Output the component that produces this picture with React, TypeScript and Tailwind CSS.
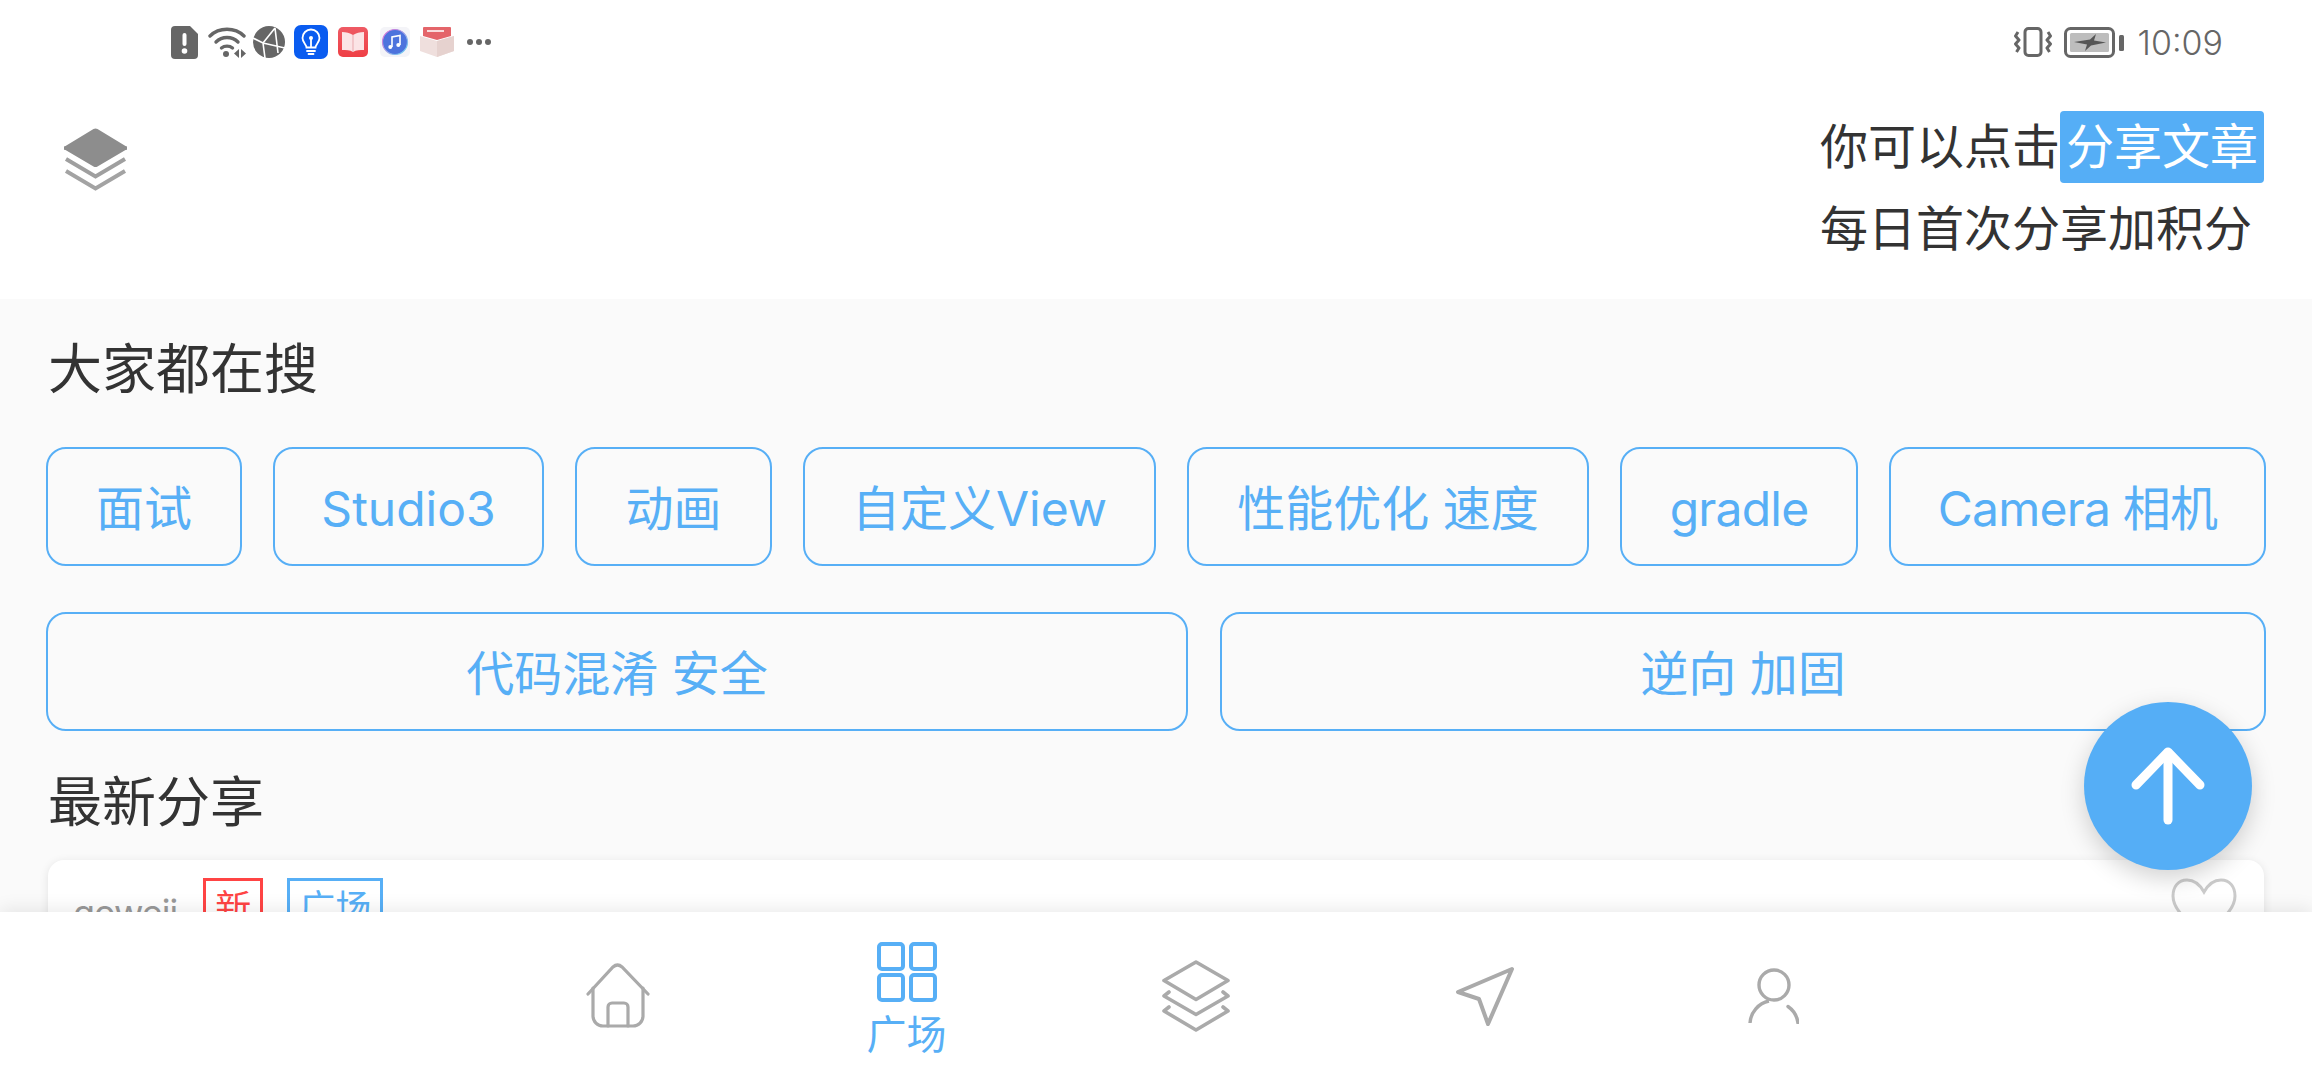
const fontStack = "font-[family-name:Inter,'Noto_Sans_CJK_SC',sans-serif]";

const tagBase =
  'flex h-[119px] items-center justify-center rounded-[20px] border-2 border-[#57aff6] pt-[4px] text-[48px] text-[#57aff6]';

const topTags = [
  { label: '面试', cls: 'w-[196px]' },
  { label: 'Studio3', cls: 'w-[271px]' },
  { label: '动画', cls: 'w-[197px]' },
  { label: '自定义View', cls: 'w-[353px]' },
  { label: '性能优化 速度', cls: 'w-[402px]' },
  { label: 'gradle', cls: 'w-[238px] tracking-[-0.8px]' },
  { label: 'Camera 相机', cls: 'w-[377px] tracking-[-0.8px]' },
];

function AlertIcon() {
  return (
    <svg width="27" height="33" viewBox="0 0 27 33">
      <path d="M4 0H19L27 8V29a4 4 0 0 1-4 4H4a4 4 0 0 1-4-4V4a4 4 0 0 1 4-4Z" fill="#666" />
      <rect x="11.5" y="7" width="4" height="13" rx="2" fill="#fff" />
      <circle cx="13.5" cy="25" r="2.8" fill="#fff" />
    </svg>
  );
}

function WifiIcon() {
  return (
    <svg width="38" height="31" viewBox="0 0 38 31" fill="none" stroke="#666" strokeWidth="3.4" strokeLinecap="round">
      <path d="M2 9C11 0 27 0 36 9" />
      <path d="M8 15C14 9 24 9 30 15" />
      <path d="M13.5 21C16.5 18.5 21.5 18.5 24.5 21" />
      <circle cx="18" cy="27" r="3" fill="#666" stroke="none" />
      <path d="M31 22V31L26 26.5Z" fill="#666" stroke="none" />
      <path d="M33 22V31L38 26.5Z" fill="#666" stroke="none" />
    </svg>
  );
}

function GlobeIcon() {
  return (
    <svg width="32" height="32" viewBox="0 0 32 32">
      <circle cx="16" cy="16" r="16" fill="#666" />
      <path d="M0 12L10 17L22 2M10 17L12 32M10 17L32 22M22 2L25 27" stroke="#fff" strokeWidth="1.6" fill="none" />
    </svg>
  );
}

function BulbIcon() {
  return (
    <svg width="34" height="34" viewBox="0 0 34 34">
      <rect width="34" height="34" rx="7" fill="#0a5cf0" />
      <path d="M12.5 22.5C12.5 19.5 8.5 17.5 8.5 13a8.500 8.500 0 0 1 17 0C25.500 17.500 21.500 19.500 21.500 22.500Z" fill="none" stroke="#fff" strokeWidth="1.8" />
      <path d="M13 26H21M14.500 29H19.500M17 22V14" stroke="#fff" strokeWidth="1.8" strokeLinecap="round" />
      <circle cx="17" cy="13" r="2" fill="#fff" />
    </svg>
  );
}

function BookIcon() {
  return (
    <svg width="30" height="30" viewBox="0 0 30 30">
      <defs>
        <linearGradient id="bookBg" x1="0" y1="0" x2="0" y2="1">
          <stop offset="0" stopColor="#ee5a64" />
          <stop offset="1" stopColor="#ef3f45" />
        </linearGradient>
      </defs>
      <rect width="30" height="30" rx="5" fill="url(#bookBg)" />
      <path d="M4 5C8 5 12 6 15 8C18 6 22 5 26 5V23C22 23 18 23 15 25C12 23 8 23 4 23Z" fill="#fbe4e6" />
      <path d="M15 8V25" stroke="#e9a9ae" strokeWidth="1" />
    </svg>
  );
}

function MusicIcon() {
  return (
    <svg width="30" height="30" viewBox="0 0 30 30">
      <defs>
        <linearGradient id="musicRing" x1="0" y1="0" x2="1" y2="1">
          <stop offset="0" stopColor="#e46bd8" />
          <stop offset="1" stopColor="#5fd4f2" />
        </linearGradient>
      </defs>
      <rect width="30" height="30" rx="5" fill="#f4f4f8" />
      <circle cx="15" cy="15" r="12.500" fill="#4d73dd" stroke="url(#musicRing)" strokeWidth="1.200" />
      <path d="M12 20V10L20 8.500V18" fill="none" stroke="#fff" strokeWidth="1.600" />
      <circle cx="10.300" cy="20" r="2" fill="#fff" />
      <circle cx="18.300" cy="18" r="2" fill="#fff" />
    </svg>
  );
}

function BoxIcon() {
  return (
    <svg width="34" height="30" viewBox="0 0 34 30">
      <path d="M0 9L17 14L34 9V24L17 30L0 24Z" fill="#efdfdd" />
      <path d="M17 14L34 9V24L17 30Z" fill="#e6d2cf" />
      <path d="M3 1a1 1 0 0 1 1-1H30a1 1 0 0 1 1 1V9L17 13L3 9Z" fill="#e4656a" />
      <rect x="7" y="3" width="17" height="2" fill="#f9dcdc" />
    </svg>
  );
}

function VibrateIcon() {
  return (
    <svg width="38" height="30" viewBox="0 0 38 30" fill="none" stroke="#666" strokeWidth="3" strokeLinejoin="round">
      <rect x="11" y="1.500" width="16" height="27" rx="3.500" />
      <path d="M4 5L1.500 9L5 13L1.500 17L5 21L2.500 25" />
      <path d="M34 5L36.500 9L33 13L36.500 17L33 21L35.500 25" />
    </svg>
  );
}

function BatteryIcon() {
  return (
    <svg width="60" height="31" viewBox="0 0 60 31">
      <rect x="1.500" y="1.500" width="48" height="28" rx="5" fill="none" stroke="#666" strokeWidth="3" />
      <rect x="6" y="6" width="39" height="19" rx="1.500" fill="#bdbdbd" />
      <path d="M10 15L26 12.500L32 7L30 13.500L42 15.500L27 18.500L21 24L23 17.500Z" fill="#555" />
      <rect x="55" y="8" width="5" height="16" rx="1.500" fill="#666" />
    </svg>
  );
}

function StackSolidIcon() {
  return (
    <svg width="63" height="63" viewBox="0 0 63 63">
      <path d="M29.500 1a4 4 0 0 1 4 0L61.500 18a2 2 0 0 1 0 4L33.500 38.500a4 4 0 0 1-4 0L1.500 22a2 2 0 0 1 0-4Z" fill="#8d8d8d" />
      <path d="M2 31L31.500 48.500L61 31" fill="none" stroke="#9f9f9f" strokeWidth="4" />
      <path d="M2 43L31.500 60.500L61 43" fill="none" stroke="#a3a3a3" strokeWidth="4" />
    </svg>
  );
}

function HomeIcon() {
  return (
    <svg width="64" height="66" viewBox="0 0 64 66" fill="none" stroke="#aaa" strokeWidth="3.200" strokeLinecap="round">
      <path d="M2 31L27 4Q31.500 0 36 4L62 31" />
      <path d="M7 25V53a10 10 0 0 0 10 10H47a10 10 0 0 0 10-10V25" />
      <path d="M22 63V44a4 4 0 0 1 4-4H38a4 4 0 0 1 4 4V63" />
    </svg>
  );
}

function GridIcon() {
  return (
    <svg width="60" height="60" viewBox="0 0 60 60" fill="none" stroke="#57aff6" strokeWidth="4">
      <rect x="2" y="2" width="24" height="25" rx="3" />
      <rect x="34" y="2" width="24" height="25" rx="3" />
      <rect x="2" y="33" width="24" height="25" rx="3" />
      <rect x="34" y="33" width="24" height="25" rx="3" />
    </svg>
  );
}

function StackOutlineIcon() {
  return (
    <svg width="68" height="72" viewBox="0 0 68 72" fill="none" stroke="#aaa" strokeWidth="3.600" strokeLinejoin="round" strokeLinecap="round">
      <path d="M34 2L66 20.500L34 39.500L2 20.500Z" />
      <path d="M7 32L2 36L34 54.500L66 36L61 32" />
      <path d="M7 47L2 51L34 70L66 51L61 47" />
    </svg>
  );
}

function SendIcon() {
  return (
    <svg width="60" height="60" viewBox="0 0 60 60" fill="none" stroke="#aaa" strokeWidth="4" strokeLinejoin="round">
      <path d="M57 3L3 26L24 33L33 58Z" />
    </svg>
  );
}

function UserIcon() {
  return (
    <svg width="51" height="56" viewBox="0 0 51 56" fill="none" stroke="#aaa" strokeWidth="3.400">
      <circle cx="26" cy="17" r="15" />
      <path d="M2 55A24 24 0 0 1 21 33" />
      <path d="M40 38.500A24 24 0 0 1 50 55" strokeLinecap="round" />
    </svg>
  );
}

function HeartIcon() {
  return (
    <svg width="66" height="58" viewBox="0 0 66 58" fill="none" stroke="#cbcbcb" strokeWidth="3">
      <path d="M33 14C28 5 21 2 16 2C7 2 2 9 2 18C2 33 20 46 33 56C46 46 64 33 64 18C64 9 59 2 50 2C45 2 38 5 33 14Z" />
    </svg>
  );
}

function ArrowIcon() {
  return (
    <svg width="74" height="78" viewBox="0 0 74 78" fill="none" stroke="#fff" strokeWidth="9" strokeLinecap="round" strokeLinejoin="round">
      <path d="M5 38L37 5L69 38" />
      <path d="M37 6V73" />
    </svg>
  );
}

function StatusBar() {
  return (
    <div className="flex h-[84px] items-center justify-between bg-white pl-[171px] pr-[89px]">
      <div className="flex items-center">
        <AlertIcon />
        <div className="ml-[10px]"><WifiIcon /></div>
        <div className="ml-[7px]"><GlobeIcon /></div>
        <div className="ml-[9px]"><BulbIcon /></div>
        <div className="ml-[10px]"><BookIcon /></div>
        <div className="ml-[12px]"><MusicIcon /></div>
        <div className="ml-[10px]"><BoxIcon /></div>
        <div className="ml-[13px] flex gap-[3px]">
          <span className="h-[6px] w-[6px] rounded-full bg-[#666]" />
          <span className="h-[6px] w-[6px] rounded-full bg-[#666]" />
          <span className="h-[6px] w-[6px] rounded-full bg-[#666]" />
        </div>
      </div>
      <div className="flex items-center">
        <VibrateIcon />
        <div className="ml-[12px]"><BatteryIcon /></div>
        <span className="ml-[14px] text-[34px] font-light text-[#666]">10:09</span>
      </div>
    </div>
  );
}

export default function App() {
  return (
    <div className={`relative flex h-[1080px] w-[2312px] flex-col overflow-hidden bg-white ${fontStack}`}>
      <StatusBar />

      <header className="flex h-[215px] items-start justify-between bg-white pl-[64px] pr-[48px]">
        <div className="mt-[44px]"><StackSolidIcon /></div>
        <div className="mt-[27px] text-[48px] leading-[72px] text-[#333]">
          <div className="flex">
            <span>你可以点击</span>
            <span className="rounded-[4px] bg-[#55aef6] px-[6px] text-white">分享文章</span>
          </div>
          <div className="mt-[10px]">每日首次分享加积分</div>
        </div>
      </header>

      <main className="flex-1 overflow-hidden bg-[#fafafa]">
        <h2 className="ml-[48px] mt-[35px] text-[54px] leading-[72px] text-[#333]">大家都在搜</h2>

        <div className="ml-[46px] mt-[41px] flex w-[2220px] gap-x-[31px]">
          {topTags.map((tag) => (
            <div key={tag.label} className={`${tagBase} ${tag.cls}`}>
              {tag.label}
            </div>
          ))}
        </div>
        <div className="ml-[46px] mt-[46px] flex w-[2220px] gap-x-[32px]">
          <div className={`${tagBase} w-[1142px]`}>代码混淆 安全</div>
          <div className={`${tagBase} w-[1046px]`}>逆向 加固</div>
        </div>

        <h2 className="ml-[48px] mt-[36px] text-[54px] leading-[72px] text-[#333]">最新分享</h2>

        <div className="mx-[48px] mt-[21px] flex h-[120px] items-start justify-between rounded-[16px] bg-white pl-[25px] pr-[27px] pt-[18px] shadow-[0_2px_10px_rgba(0,0,0,0.1)]">
          <div className="flex items-start">
            <span className="mt-[8px] text-[36px] tracking-[-1px] text-[#999]">gowejj</span>
            <span className="ml-[26px] border-[3px] border-[#f44] px-[9px] text-[36px] leading-[54px] text-[#f44]">新</span>
            <span className="ml-[24px] border-[3px] border-[#57aff6] px-[9px] text-[36px] leading-[54px] text-[#57aff6]">广场</span>
          </div>
          <HeartIcon />
        </div>
      </main>

      <nav className="relative flex h-[168px] items-start bg-white pl-[473px] shadow-[0_-4px_16px_rgba(0,0,0,0.08)]">
        <div className="flex w-[289px] justify-center pt-[51px]"><HomeIcon /></div>
        <div className="flex w-[289px] flex-col items-center pt-[30px]">
          <GridIcon />
          <span className="mt-[9px] text-[40px] leading-[48px] text-[#57aff6]">广场</span>
        </div>
        <div className="flex w-[289px] justify-center pt-[48px]"><StackOutlineIcon /></div>
        <div className="flex w-[289px] justify-center pt-[54px]"><SendIcon /></div>
        <div className="flex w-[289px] justify-center pt-[56px]"><UserIcon /></div>
      </nav>

      <button
        type="button"
        className="absolute left-[2084px] top-[702px] flex h-[168px] w-[168px] items-center justify-center rounded-full bg-[#55aef6] shadow-[0_8px_24px_rgba(0,0,0,0.18)]"
      >
        <ArrowIcon />
      </button>
    </div>
  );
}
